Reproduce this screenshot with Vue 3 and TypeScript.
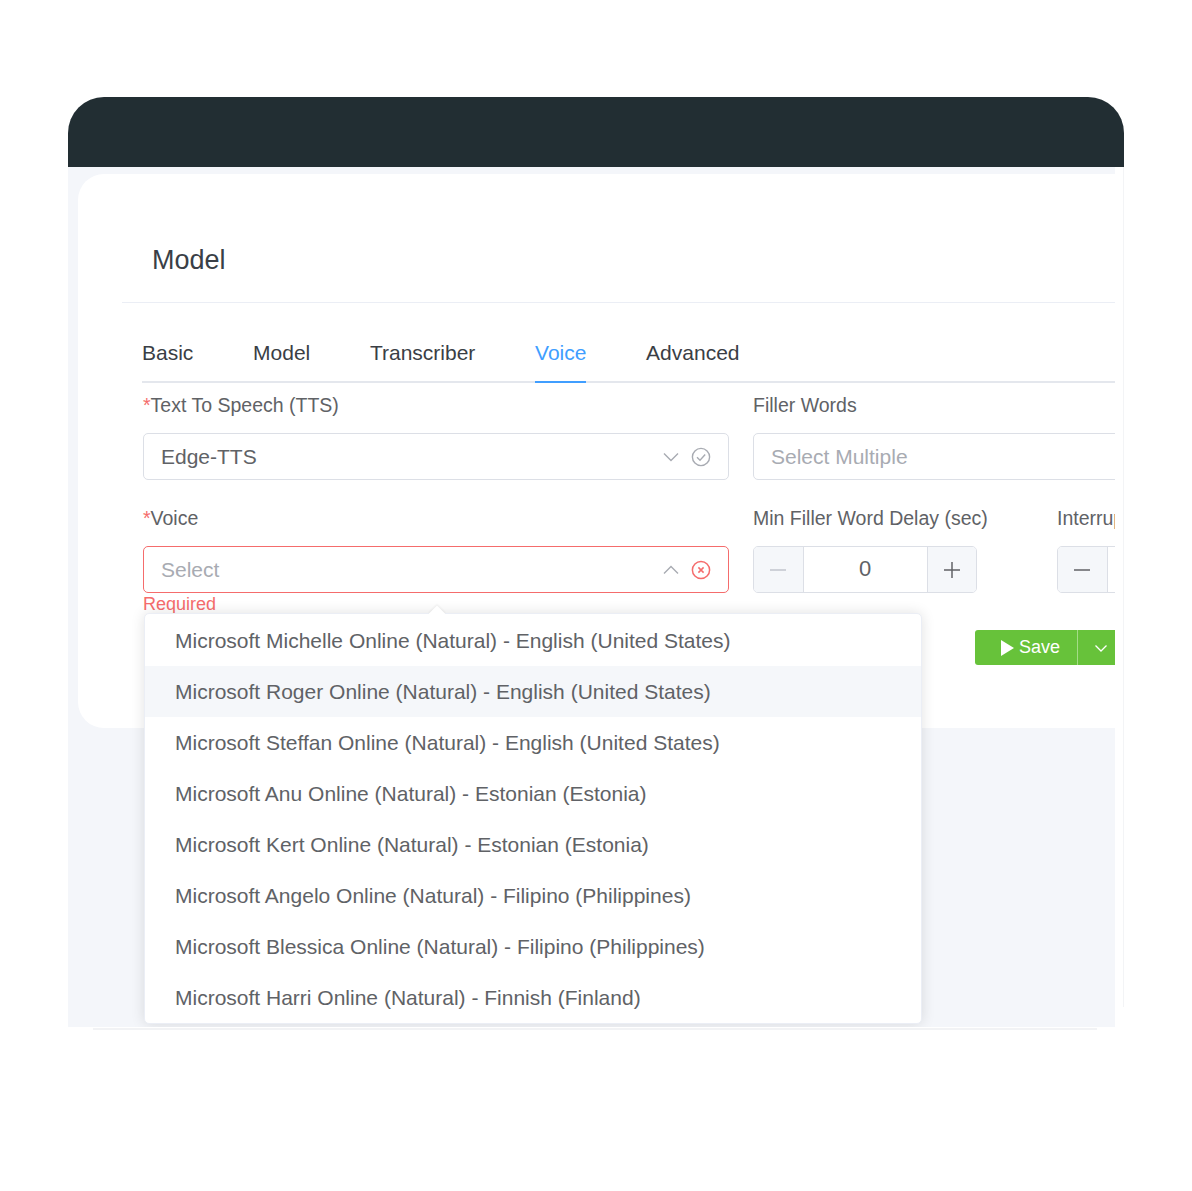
<template>
  <div class="page">
    <div class="window">
      <div class="bar" />
      <div class="body">
        <div class="card">
          <h2 class="title">Model</h2>
          <div class="content">
            <nav class="tabs">
              <span v-for="tab in tabs" :key="tab" class="tab" :class="{ active: tab === 'Voice' }">{{ tab }}</span>
            </nav>
            <div class="form">
              <div class="field">
                <label class="label"><i class="star">*</i>Text To Speech (TTS)</label>
                <div class="select">
                  <span class="value">Edge-TTS</span>
                  <svg class="icon" width="18" height="18" viewBox="0 0 18 18"><path d="M2 5.5l7 7 7-7" fill="none" stroke="#a8abb2" stroke-width="1.4" /></svg>
                  <svg class="icon" width="20" height="20" viewBox="0 0 20 20"><circle cx="10" cy="10" r="8.6" fill="none" stroke="#a8abb2" stroke-width="1.4" /><path d="M6 10.2l3 3 5.2-5.6" fill="none" stroke="#a8abb2" stroke-width="1.4" /></svg>
                </div>
              </div>
              <div class="field">
                <label class="label">Filler Words</label>
                <div class="select select-wide">
                  <span class="placeholder">Select Multiple</span>
                </div>
              </div>
              <div class="field voice-field">
                <label class="label"><i class="star">*</i>Voice</label>
                <div class="select invalid">
                  <span class="placeholder">Select</span>
                  <svg class="icon" width="18" height="18" viewBox="0 0 18 18"><path d="M2 12.5l7-7 7 7" fill="none" stroke="#a8abb2" stroke-width="1.4" /></svg>
                  <svg class="icon" width="20" height="20" viewBox="0 0 20 20"><circle cx="10" cy="10" r="8.6" fill="none" stroke="#f56c6c" stroke-width="1.5" /><path d="M7.4 7.4l5.2 5.2M12.6 7.4l-5.2 5.2" fill="none" stroke="#f56c6c" stroke-width="1.5" /></svg>
                </div>
                <div class="error">Required</div>
                <div class="dropdown">
                  <span class="arrow" />
                  <div v-for="(voice, i) in voices" :key="voice" class="option" :class="{ hover: i === 1 }">{{ voice }}</div>
                </div>
              </div>
              <div class="right-col">
                <div class="numbers">
                  <div class="field">
                    <label class="label">Min Filler Word Delay (sec)</label>
                    <div class="number">
                      <span class="step"><svg width="18" height="18" viewBox="0 0 18 18"><path d="M1 9h16" stroke="#c0c4cc" stroke-width="1.5" /></svg></span>
                      <span class="num-value">0</span>
                      <span class="step"><svg width="18" height="18" viewBox="0 0 18 18"><path d="M1 9h16M9 1v16" stroke="#606266" stroke-width="1.5" /></svg></span>
                    </div>
                  </div>
                  <div class="field">
                    <label class="label">Interruption</label>
                    <div class="number">
                      <span class="step"><svg width="18" height="18" viewBox="0 0 18 18"><path d="M1 9h16" stroke="#606266" stroke-width="1.5" /></svg></span>
                      <span class="num-value">0</span>
                      <span class="step"><svg width="18" height="18" viewBox="0 0 18 18"><path d="M1 9h16M9 1v16" stroke="#606266" stroke-width="1.5" /></svg></span>
                    </div>
                  </div>
                </div>
                <div class="save">
                  <span class="save-main">
                    <svg width="13" height="16" viewBox="0 0 13 16"><path d="M0 0l13 8-13 8z" fill="#fff" /></svg>
                    Save
                  </span>
                  <span class="save-more">
                    <svg width="14" height="14" viewBox="0 0 14 14"><path d="M1.5 4.5l5.5 5.5 5.5-5.5" fill="none" stroke="#fff" stroke-width="1.3" /></svg>
                  </span>
                </div>
              </div>
            </div>
          </div>
        </div>
      </div>
      <div class="base-line" />
    </div>
  </div>
</template>

<script setup lang="ts">
const tabs: string[] = ['Basic', 'Model', 'Transcriber', 'Voice', 'Advanced']

const voices: string[] = [
  'Microsoft Michelle Online (Natural) - English (United States)',
  'Microsoft Roger Online (Natural) - English (United States)',
  'Microsoft Steffan Online (Natural) - English (United States)',
  'Microsoft Anu Online (Natural) - Estonian (Estonia)',
  'Microsoft Kert Online (Natural) - Estonian (Estonia)',
  'Microsoft Angelo Online (Natural) - Filipino (Philippines)',
  'Microsoft Blessica Online (Natural) - Filipino (Philippines)',
  'Microsoft Harri Online (Natural) - Finnish (Finland)',
]
</script>

<style>
html, body { background: #fff; }
</style>

<style scoped>
.page {
  width: 1192px;
  height: 1191px;
  padding: 97px 0 0 68px;
  box-sizing: border-box;
  font-family: "Liberation Sans", Arial, sans-serif;
  overflow: hidden;
}

.window {
  width: 1056px;
  height: 910px;
  border-right: 1px solid #f3f4f6;
  border-radius: 36px 36px 0 0;
  box-sizing: border-box;
}

.bar {
  width: 1056px;
  height: 70px;
  background: #222e33;
  border-radius: 36px 36px 0 0;
}

.body {
  width: 1047px;
  height: 860px;
  padding: 7px 0 0 10px;
  box-sizing: border-box;
  background: #f4f6fa;
  overflow: hidden;
}

.base-line {
  width: 1004px;
  height: 2px;
  margin: 1px 0 0 25px;
  background: #f2f3f5;
}

.card {
  width: 1100px;
  height: 554px;
  box-sizing: border-box;
  padding-left: 44px;
  background: #fff;
  border-radius: 26px 0 0 26px;
}

.title {
  height: 129px;
  margin: 0;
  padding: 0 0 0 30px;
  box-sizing: border-box;
  border-bottom: 1px solid #ebeef5;
  font-size: 27px;
  font-weight: 400;
  line-height: 172px;
  color: #3a3f47;
}

.content { padding-left: 20px; }

.tabs {
  display: flex;
  gap: 59.7px;
  height: 80px;
  box-sizing: border-box;
  border-bottom: 2px solid #e4e7ed;
}

.tab {
  height: 80px;
  box-sizing: border-box;
  padding-top: 37px;
  font-size: 21px;
  line-height: 26px;
  color: #3a3e45;
}

.tab.active {
  color: #409eff;
  border-bottom: 2px solid #409eff;
}

.form {
  display: grid;
  grid-template-columns: 586px 500px;
  column-gap: 24px;
  padding-left: 1px;
}

.field { min-width: 0; }

.label {
  display: block;
  height: 50px;
  font-size: 19.5px;
  line-height: 44px;
  white-space: nowrap;
  color: #606266;
}

.star {
  font-style: normal;
  color: #f56c6c;
}

.select {
  display: flex;
  align-items: center;
  gap: 11px;
  height: 47px;
  padding: 0 17px;
  box-sizing: border-box;
  border: 1.5px solid #dcdfe6;
  border-radius: 5px;
  background: #fff;
}

.select-wide { width: 500px; }

.value, .placeholder {
  font-size: 21px;
  margin-right: auto;
}
.value { color: #606266; }
.placeholder { color: #a8abb2; }

.invalid { border-color: #f56c6c; }

.voice-field {
  position: relative;
  padding-top: 16px;
}

.right-col { padding-top: 16px; }

.error {
  font-size: 18px;
  line-height: 22px;
  color: #f56c6c;
}

.dropdown {
  position: absolute;
  left: 1px;
  top: 133px;
  width: 778px;
  padding: 1px 0 0;
  box-sizing: border-box;
  background: #fff;
  border: 1px solid #ebeef5;
  border-radius: 5px;
  box-shadow: 0 0 14px rgba(0, 0, 0, 0.12);
}

.arrow {
  position: absolute;
  left: 286px;
  top: -6px;
  width: 12px;
  height: 12px;
  background: #fff;
  transform: rotate(45deg);
  box-shadow: -1px -1px 2px rgba(0, 0, 0, 0.05);
}

.option {
  position: relative;
  height: 51px;
  padding-left: 30px;
  font-size: 21px;
  line-height: 51px;
  white-space: nowrap;
  color: #606266;
}

.option.hover { background: #f5f7fa; }

.numbers {
  display: flex;
  gap: 80px;
}

.numbers .field { flex: 0 0 224px; }

.number {
  display: flex;
  width: 224px;
  height: 47px;
  box-sizing: border-box;
  border: 1.5px solid #dcdfe6;
  border-radius: 5px;
  overflow: hidden;
}

.step {
  display: flex;
  flex: 0 0 48.5px;
  align-items: center;
  justify-content: center;
  background: #f5f7fa;
}

.step:first-child { border-right: 1.5px solid #dcdfe6; }
.step:last-child { border-left: 1.5px solid #dcdfe6; }

.num-value {
  flex: 1;
  text-align: center;
  font-size: 22px;
  line-height: 43px;
  color: #606266;
}

.save {
  display: flex;
  width: 160px;
  height: 35px;
  margin: 37px 0 0 222px;
  border-radius: 3px;
  overflow: hidden;
  background: #67c23a;
  color: #fff;
}

.save-main {
  display: flex;
  flex: 0 0 103px;
  align-items: center;
  justify-content: center;
  gap: 5px;
  padding-left: 9px;
  box-sizing: border-box;
  font-size: 18px;
  border-right: 1px solid #a4dc88;
}

.save-more {
  display: flex;
  flex: 0 0 46px;
  align-items: center;
  justify-content: center;
}
</style>
